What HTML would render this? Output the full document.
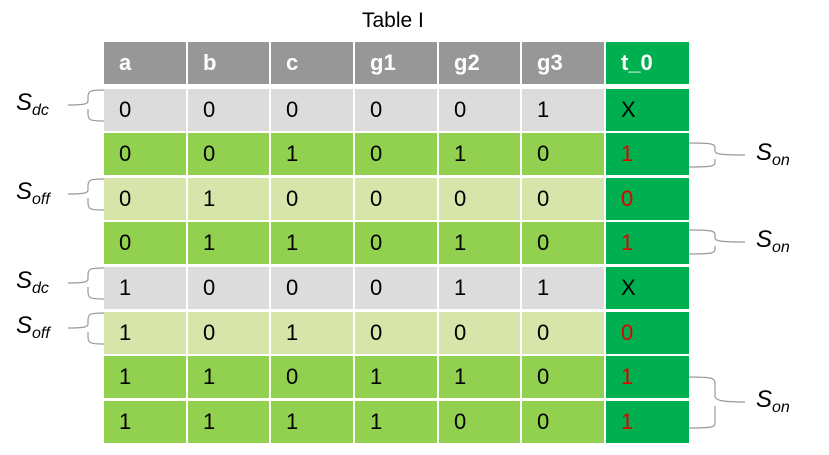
<!DOCTYPE html>
<html><head><meta charset="utf-8"><style>
body{margin:0;width:829px;height:455px;background:#fff;position:relative;overflow:hidden;font-family:"Liberation Sans",Arial,sans-serif}
.c{position:absolute;box-sizing:border-box;padding-left:15px;display:flex;align-items:center;font-size:22px;color:#000}
.h{background:#979797;color:#fff;font-weight:bold}
.g{background:#dcdcdc}.G{background:#92d050}.L{background:#d7e4aa}.T{background:#00b050}
.r{color:#e00000}
.lab{position:absolute;font-size:24px;font-style:italic;color:#000}
.lab sub{font-size:16px;vertical-align:-5px}
</style></head><body>
<div style="position:absolute;left:362px;top:9px;font-size:21px">Table I</div>
<div id="t"></div>
<svg width="829" height="455" style="position:absolute;left:0;top:0" fill="none" stroke="#999" stroke-width="1.2">
<path d="M104,90 C90,90 88,91 88,97 L88,101 C88,104 84,105 68,105 M88,109 L88,114 C88,120 90,121 104,121"/>
<path d="M104,179 C90,179 88,180 88,186 L88,190 C88,193 84,194 68,194 M88,198 L88,203 C88,209 90,210 104,210"/>
<path d="M104,268 C90,268 88,269 88,275 L88,279 C88,282 84,283 68,283 M88,287 L88,292 C88,298 90,299 104,299"/>
<path d="M104,313 C90,313 88,314 88,320 L88,324 C88,327 84,328 68,328 M88,332 L88,337 C88,343 90,344 104,344"/>
<path d="M689,143 C713,143 715,144 715,148 L715,151 C715,154 720,155 745,155 M715,159 L715,162 C715,166 713,167 689,167"/>
<path d="M689,230 C713,230 715,231 715,235 L715,238 C715,241 720,242 745,242 M715,246 L715,249 C715,253 713,254 689,254"/>
<path d="M689,377 C713,377 715,378 715,384 L715,396 C715,400 720,402 745,402 M715,406 L715,423 C715,427 713,428 689,428"/>
</svg>
<div class="lab" style="left:16px;top:89px">S<sub>dc</sub></div>
<div class="lab" style="left:16px;top:178px">S<sub>off</sub></div>
<div class="lab" style="left:16px;top:267px">S<sub>dc</sub></div>
<div class="lab" style="left:16px;top:312px">S<sub>off</sub></div>
<div class="lab" style="left:756px;top:139px">S<sub>on</sub></div>
<div class="lab" style="left:756px;top:226px">S<sub>on</sub></div>
<div class="lab" style="left:756px;top:386px">S<sub>on</sub></div>
<script>
var xs=[104,188,271,355,439,522,606],ws=[82,81,82,82,81,82,83];
var hd=["a","b","c","g1","g2","g3","t_0"];
var rows=[["g","0","0","0","0","0","1","X"],["G","0","0","1","0","1","0","1"],["L","0","1","0","0","0","0","0"],["G","0","1","1","0","1","0","1"],["g","1","0","0","0","1","1","X"],["L","1","0","1","0","0","0","0"],["G","1","1","0","1","1","0","1"],["G","1","1","1","1","0","0","1"]];
var h="";
for(var j=0;j<7;j++){h+='<div class="c h '+(j==6?'T':'')+'" style="left:'+xs[j]+'px;top:42px;width:'+ws[j]+'px;height:42px">'+hd[j]+'</div>';}
for(var i=0;i<8;i++){var t=Math.round(88.5+44.6*i);for(var j=0;j<7;j++){var cls=j==6?'T'+(rows[i][7]=="X"?'':' r'):rows[i][0];h+='<div class="c '+cls+'" style="left:'+xs[j]+'px;top:'+t+'px;width:'+ws[j]+'px;height:42px">'+rows[i][j+1]+'</div>';}}
document.getElementById("t").innerHTML=h;
</script>
</body></html>
